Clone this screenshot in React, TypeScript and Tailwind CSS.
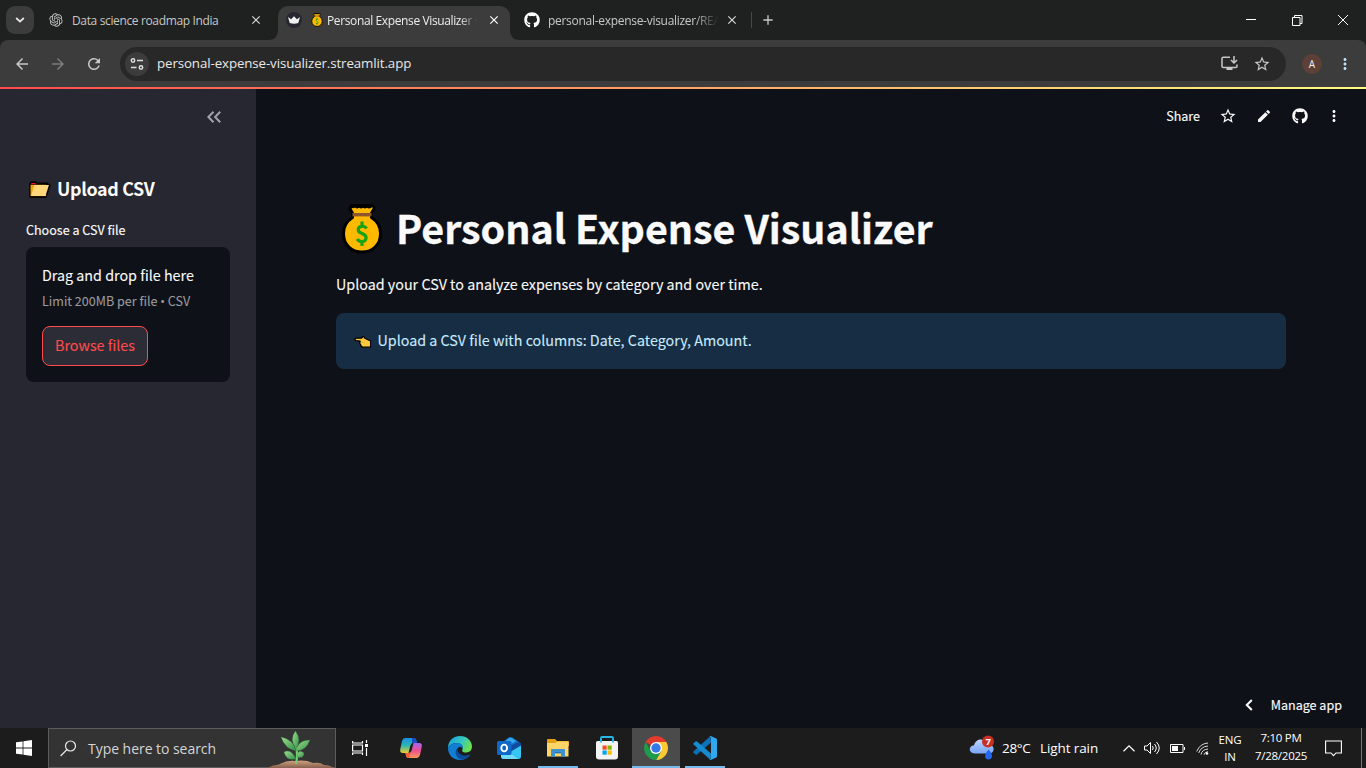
import React from "react";
import {
  MdArrowBack,
  MdArrowForward,
  MdRefresh,
  MdStarBorder,
  MdMoreVert,
  MdEdit,
  MdAdd,
  MdClose,
} from "react-icons/md";
import { RiOpenaiFill } from "react-icons/ri";
import { FaGithub } from "react-icons/fa";

const SANS = "font-['Noto_Sans_CJK_SC',sans-serif]";
const UI = "font-['Open_Sans','Noto_Sans',sans-serif]";

function MoneyBag({ className }: { className: string }) {
  return (
    <svg viewBox="0 0 40 50" className={className}>
      <path
        d="M9 2.5Q9 1.5 11 1.5H29.5Q32.500 1.500 32 5L29.500 9V13.500C35 17 38.500 22.500 38.500 29.500C38.500 41 30.500 48 20 48S1.500 41 1.500 29.500C1.500 22.500 5 17 10.500 13.500V9L8 5Z"
        fill="#ffb900"
        stroke="#000"
        strokeWidth="3"
        strokeLinejoin="round"
      />
      <path d="M9 3.200q2 1.800 4 .3q2 1.800 4 .3q2 1.600 4 0q2 1.600 4 0q2 1.600 5-.5V2H9Z" fill="#000" />
      <rect x="10.500" y="9" width="19" height="3.400" fill="#8e562e" />
      <path
        d="M24.500 24.500Q23 22 19.500 22.300C15.500 22.600 15.200 27.500 18.500 28.800L21.500 30.200C25.500 32 24.500 37.300 20.300 37.500Q16.500 37.600 15.200 35M20 17.500v5M20 37v5"
        fill="none"
        stroke="#16a316"
        strokeWidth="3.200"
      />
    </svg>
  );
}

function FolderEmoji() {
  return (
    <svg viewBox="0 0 24 18" className="ml-0.5 h-[17px] w-[23px]">
      <path d="M2 3.500Q2 1 4.500 1H8l2 1.500H20q1 0 1 1.500l2 .5-4.200 12.500H2Z" fill="#000" stroke="#000" strokeWidth="1.600" strokeLinejoin="round" />
      <path d="M2.500 4H19v12H2.500Z" fill="#f0a500" />
      <path d="M3.500 2h4l1.500 1.500h-6.500Z" fill="#e81224" />
      <path d="M6.500 4.300H22L18.300 16H3Z" fill="#ffd679" />
    </svg>
  );
}

function PointEmoji() {
  return (
    <svg viewBox="0 0 19 14" className="mt-[5px] h-[14px] w-[18px]">
      <path
        d="M1 4Q1 3 2.500 3H8L9.500 1.200Q11 1 11 2.800L17.500 6V12.500H9.500Q7 12 7.200 10L6 8.500L6.500 6L2 5.500Q1 5 1 4Z"
        fill="#ffc83d"
        stroke="#000"
        strokeWidth="1.300"
        strokeLinejoin="round"
      />
      <path d="M8 7.500h3" stroke="#e0a52a" strokeWidth=".6" />
    </svg>
  );
}

function TabStrip() {
  return (
    <div className="flex h-10 shrink-0 items-center bg-[#1f2120] text-[#c7c7c7]">
      <div className="ml-1.5 flex h-7 w-7 items-center justify-center rounded-[9px] bg-[#3c3c3c]">
        <svg viewBox="0 0 10 6" className="h-1.5 w-2.5">
          <path d="M1.200 1l3.800 3.600L8.800 1" fill="none" stroke="#e8e8e8" strokeWidth="1.800" />
        </svg>
      </div>
      <RiOpenaiFill className="ml-[14px] h-4 w-4" />
      <span className="ml-2 w-[177px] whitespace-nowrap pt-0.5 text-[12px] tracking-[-0.36px]">Data science roadmap India</span>
      <MdClose className="h-[14px] w-[14px] text-[#d8d8d8]" />
      <svg viewBox="0 0 10 10" className="ml-[5px] h-2.5 w-2.5 self-end">
        <path d="M10 0V10H0Q10 10 10 0Z" fill="#3c3c3c" />
      </svg>
      <div className="flex h-[34px] w-[232px] items-center self-end rounded-t-[10px] bg-[#3c3c3c] pb-1.5 text-[#ececec]">
        <div className="ml-2 flex h-4 w-4 items-center justify-center rounded-full bg-[#262730]">
          <svg viewBox="0 0 14 9" className="h-2 w-3">
            <path d="M0 1l3.600 2.500L7 0l3.400 3.500L14 1l-2 7Q7 9.500 2 8Z" fill="#f0f0f0" />
          </svg>
        </div>
        <MoneyBag className="ml-[9px] h-[14px] w-3" />
        <span className="ml-1 w-[151px] whitespace-nowrap pt-0.5 text-[12px] tracking-[-0.38px] [mask-image:linear-gradient(90deg,#000_88%,transparent)]">
          Personal Expense Visualizer ·
        </span>
        <MdClose className="ml-[9px] h-[14px] w-[14px] text-white" />
      </div>
      <svg viewBox="0 0 10 10" className="h-2.5 w-2.5 self-end">
        <path d="M0 0V10H10Q0 10 0 0Z" fill="#3c3c3c" />
      </svg>
      <FaGithub className="ml-1 h-4 w-4 text-white" />
      <span className="ml-2 w-[172px] whitespace-nowrap pt-0.5 text-[12px] tracking-[-0.29px] [mask-image:linear-gradient(90deg,#000_85%,transparent_99%)]">
        personal-expense-visualizer/REA
      </span>
      <MdClose className="ml-[5px] h-[14px] w-[14px] text-[#d8d8d8]" />
      <div className="ml-3 h-4 w-px bg-[#464746]" />
      <MdAdd className="ml-2 h-4 w-4" />
      <svg viewBox="0 0 104 12" className="ml-auto mr-[17px] h-3 w-[104px]" fill="none" stroke="#fff" strokeWidth="1">
        <path d="M1 5.500h10M47.500 3.500h7.500v8h-7.500zM49.500 3.500v-2h7.500v8h-2M93 1l10 10M103 1l-10 10" />
      </svg>
    </div>
  );
}

function Toolbar() {
  return (
    <div className="h-[47px] shrink-0 bg-[#1f2120]">
      <div className="flex h-full items-center rounded-t-[8px] bg-[#3c3c3c] text-[#c7c7c7]">
        <MdArrowBack className="ml-[13px] h-[18px] w-[18px]" />
        <MdArrowForward className="ml-[18px] h-[18px] w-[18px] text-[#7b7b7b]" />
        <MdRefresh className="ml-[18px] h-[18px] w-[18px]" />
        <div className="ml-[17px] flex h-[34px] w-[1166px] items-center rounded-full bg-[#282828]">
          <div className="ml-[5px] flex h-6 w-6 items-center justify-center rounded-full bg-[#3c3c3c]">
            <svg viewBox="0 0 14 12" className="h-3 w-3.5" fill="none" stroke="#dedede" strokeWidth="1.500">
              <circle cx="3" cy="2.500" r="1.700" />
              <path d="M7 2.500h6M1 9.500h5.500" />
              <circle cx="11" cy="9.500" r="1.700" />
            </svg>
          </div>
          <span className="ml-2 text-[13.300px] tracking-[-0.1px] text-[#e8e8e8]">personal-expense-visualizer.streamlit.app</span>
          <svg viewBox="0 0 17 15" className="ml-auto h-[15px] w-[17px]" fill="none" stroke="#c7c7c7" strokeWidth="1.500">
            <path d="M9 1.200H2.200Q1 1.200 1 2.400V10.300Q1 11.500 2.200 11.500H14.800Q16 11.500 16 10.300V8.500M13 0v6.500M10 4l3 3l3-3" />
            <path d="M5.500 12h6v2h-6z" fill="#c7c7c7" stroke="none" />
          </svg>
          <MdStarBorder className="ml-[15px] mr-[15px] h-[18px] w-[18px]" />
        </div>
        <div className="ml-4 flex h-5 w-5 items-center justify-center rounded-full bg-[#5d4037] text-[10px] leading-none text-[#f3efed]">A</div>
        <MdMoreVert className="ml-3.5 h-[18px] w-[18px] text-[#bfe0fb]" />
      </div>
    </div>
  );
}

function Sidebar() {
  return (
    <aside className="flex w-64 shrink-0 flex-col bg-[#262730] px-[26px] text-[#fafafa]">
      <svg viewBox="0 0 14 12" className="mr-[9px] mt-[22px] h-3 w-[14px] self-end" fill="none" stroke="#a3a4a9" strokeWidth="2">
        <path d="M6.500 .8L1.400 6L6.500 11.200M13.200 .8L8.100 6L13.200 11.200" />
      </svg>
      <div className="mt-[54px] flex h-6 items-center">
        <FolderEmoji />
        <h2 className="-mt-0.5 ml-[6px] whitespace-nowrap text-[17.900px] font-bold leading-6 tracking-[-0.35px]">Upload CSV</h2>
      </div>
      <div className="mt-[19px] h-5 text-[12.550px] leading-5 [-webkit-text-stroke:0.15px]">Choose a CSV file</div>
      <div className="mt-[7px] flex h-[135px] flex-col rounded-lg bg-[#0e1117] px-4">
        <div className="mt-4 h-6 whitespace-nowrap text-[14.300px] leading-6 [-webkit-text-stroke:0.1px]">Drag and drop file here</div>
        <div className="mt-1 h-5 whitespace-nowrap text-[12.550px] leading-5 text-[#9a9b9f] [-webkit-text-stroke:0.1px]">
          Limit 200MB per file <span className="font-['Open_Sans',sans-serif]">•</span> CSV
        </div>
        <button className="mt-[15px] flex h-10 w-[106px] justify-center rounded-lg border border-[#ff4b4b] bg-[#2b2c36] pt-1.5 text-[14.300px] leading-6 text-[#ff4b4b] [-webkit-text-stroke:0.1px]">
          Browse files
        </button>
      </div>
    </aside>
  );
}

function MainPanel() {
  return (
    <main className="flex min-w-0 flex-1 flex-col text-[#fafafa]">
      <div className="flex h-[54px] items-center justify-end pr-[23px]">
        <span className="text-[12.550px] leading-5 [-webkit-text-stroke:0.15px]">Share</span>
        <MdStarBorder className="ml-[19px] h-[18px] w-[18px]" />
        <MdEdit className="ml-[19px] h-4 w-4" />
        <FaGithub className="ml-5 h-4 w-4" />
        <MdMoreVert className="ml-[17px] h-[18px] w-[18px]" />
      </div>
      <div className="mt-[59px] flex h-[53px] items-center pl-[86px]">
        <MoneyBag className="h-[50px] w-10" />
        <h1 className="-mt-[5px] ml-[14px] whitespace-nowrap text-[39.400px] font-bold leading-[53px] [-webkit-text-stroke:0.3px]">
          Personal Expense Visualizer
        </h1>
      </div>
      <p className="ml-20 mt-[17px] h-6 text-[14.300px] leading-6 tracking-[0.01px] [-webkit-text-stroke:0.1px]">
        Upload your CSV to analyze expenses by category and over time.
      </p>
      <div className="ml-20 mr-20 mt-[17px] flex h-14 items-center rounded-lg bg-[#172d43] pb-[3px] pl-[18px] text-[14.300px] leading-6 text-[#c7ebff]">
        <PointEmoji />
        <span className="ml-[5.500px] [-webkit-text-stroke:0.1px]">Upload a CSV file with columns: Date, Category, Amount.</span>
      </div>
      <div className="mt-auto flex h-[46px] items-center justify-end pr-6">
        <svg viewBox="0 0 8 12" className="h-3 w-2" fill="none" stroke="#fff" strokeWidth="2">
          <path d="M6.800 1L1.800 6L6.800 11" />
        </svg>
        <span className="ml-[18px] text-[12.550px] leading-5 [-webkit-text-stroke:0.15px]">Manage app</span>
      </div>
    </main>
  );
}

function Plant() {
  return (
    <svg viewBox="0 0 68 39" className="mt-auto h-[39px] w-[68px]">
      <defs>
        <linearGradient id="leaf" x1="0" y1="0" x2="1" y2="1">
          <stop offset="0" stopColor="#a3dd8d" />
          <stop offset="1" stopColor="#2f8f48" />
        </linearGradient>
        <linearGradient id="soil" x1="0" y1="0" x2="0" y2="1">
          <stop offset="0" stopColor="#d09f80" />
          <stop offset="1" stopColor="#85604c" />
        </linearGradient>
      </defs>
      <path d="M0 39Q5 36 12 35.500Q20 31 28 32Q38 30.500 46 34Q53 33 57 36Q63 36 67 39Z" fill="url(#soil)" />
      <path d="M29 35Q31 26 29 16" fill="none" stroke="#74ce70" strokeWidth="2.200" />
      <g fill="url(#leaf)" stroke="#287a3c" strokeWidth=".3">
        <path d="M29 20Q22 10 28.500 2Q35 11 29 20Z" />
        <path d="M29 22Q18 20 14 8Q26 10 29 22Z" />
        <path d="M29 22Q31 11 43 11Q39 22 29 22Z" />
        <path d="M29 30Q24 19 17 23Q19 32 29 30Z" />
        <path d="M30 28Q31 19 37 24Q37 30 30 28Z" />
      </g>
    </svg>
  );
}

function CopilotIcon() {
  return (
    <svg viewBox="0 0 24 24" className="h-6 w-6">
      <defs>
        <linearGradient id="cp1" x1="0" y1="0" x2="0" y2="1">
          <stop offset="0" stopColor="#1b8ce8" />
          <stop offset=".5" stopColor="#29b8b0" />
          <stop offset="1" stopColor="#f3cc2d" />
        </linearGradient>
        <linearGradient id="cp2" x1="0" y1="0" x2="0" y2="1">
          <stop offset="0" stopColor="#a565ee" />
          <stop offset=".5" stopColor="#ee4f91" />
          <stop offset="1" stopColor="#ff9b58" />
        </linearGradient>
      </defs>
      <path d="M6 2H15Q17 2 18 7H14Q12 7 11 11L9.500 17H4Q0 17 1.500 12L3 5Q4 2 6 2Z" fill="url(#cp1)" />
      <path d="M13 2h2.500q1.500 0 2.500 5h-5Z" fill="#174fc4" />
      <path d="M18 22H9Q7 22 6.500 17H10Q12 17 13 13L14.500 7H20Q24 7 22.500 12L21 19Q20 22 18 22Z" fill="url(#cp2)" />
      <path d="M6.500 17H10L11.500 16L10 22H9Q7 22 6.500 17Z" fill="#f45b3b" />
    </svg>
  );
}

function EdgeIcon() {
  return (
    <svg viewBox="0 0 24 24" className="h-6 w-6">
      <defs>
        <linearGradient id="ed1" x1="0" y1="0" x2="1" y2=".4">
          <stop offset="0" stopColor="#159cda" />
          <stop offset=".6" stopColor="#35c6c3" />
          <stop offset="1" stopColor="#68e052" />
        </linearGradient>
      </defs>
      <path d="M0 12C0 4 6 0 12 0C19 0 24 5 24 10.500C24 15 20.500 16.500 17.500 16.500C14.500 16.500 14 15 14.300 14C16 10 13 7 9 7Q3 7 0 12Z" fill="url(#ed1)" />
      <path d="M0 12Q3 7 9 7C13 7 15.500 9.500 14.800 12.500Q12 9 9.500 12.500C7 17 11 22 18 20Q22 19 22.300 18.500C20 22 16.500 24 12 24C5 24 0 19 0 12Z" fill="#117ed3" />
      <path d="M9 12.500C5.500 17 9 23 14 23.800Q19 23 22.300 18.300Q17 21 13 18.500Q9 16 9 12.500Z" fill="#0c4c9c" />
    </svg>
  );
}

function OutlookIcon() {
  return (
    <svg viewBox="0 0 24 24" className="h-6 w-6">
      <path d="M4 7.500L11.500 1.500Q13.500.5 15.500 1.500L24 7.500V20Q24 23 21 23H6Q4 23 4 20Z" fill="#1272cc" />
      <path d="M6 7L12 2.200Q13.500 1.500 15 2.200L19 5L10 10.500Z" fill="#35a8ea" />
      <path d="M13 10L22 5.800L24 7.500V10L14 15.500Z" fill="#104a9e" />
      <path d="M24 9.500V20Q24 23 21 23H8Q5 23 4 21L14 15.500Z" fill="#36c5f1" />
      <path d="M4 18.500L13 17L21 23H7Q4 23 4 20Z" fill="#6fdcf8" />
      <rect x="0" y="5" width="14.500" height="14" rx="1.500" fill="#0d68c8" />
      <ellipse cx="7.200" cy="12" rx="2.900" ry="3.400" fill="none" stroke="#fff" strokeWidth="1.900" />
    </svg>
  );
}

function ExplorerIcon() {
  return (
    <svg viewBox="0 0 22 20" className="h-5 w-[22px]">
      <path d="M0 1.500Q0 1 1 1H8l2 2H21q1 0 1 1v4H0Z" fill="#e2a015" />
      <path d="M0 5H8.500L10 3.500H21.500V18.500H0Z" fill="#ffd567" />
      <path d="M4 18.800V11.500Q4 11 5 11H17q1 0 1 .8V18.800H14V15.500H8V18.800Z" fill="#3d91d2" />
      <path d="M8 14.500h6" stroke="#2375b5" />
    </svg>
  );
}

function StoreIcon() {
  return (
    <svg viewBox="0 0 24 24" className="h-6 w-6">
      <path d="M6 7V1.800Q6 1 7 1H17q1 0 1 .8V7" fill="none" stroke="#27b7e7" strokeWidth="1.800" />
      <path d="M1 6.500Q1 5 2.500 5H21.500Q23 5 23 6.500V20.500Q23 23.500 20 23.500H4Q1 23.500 1 20.500Z" fill="#f3f3f3" />
      <path d="M6 6.500V3M18 6.500V3" stroke="#27b7e7" strokeWidth="1.800" />
      <path d="M7.500 9.500h4.200v4.200H7.500z" fill="#f25022" />
      <path d="M12.500 9.500h4.200v4.200h-4.200z" fill="#7fba00" />
      <path d="M7.500 14.500h4.200v4.200H7.500z" fill="#00a4ef" />
      <path d="M12.500 14.500h4.200v4.200h-4.200z" fill="#ffb900" />
    </svg>
  );
}

function ChromeIcon() {
  return (
    <svg viewBox="0 0 24 24" className="h-6 w-6">
      <path d="M12 12L1.608 6A12 12 0 0 1 22.392 6Z" fill="#e33b2e" />
      <path d="M12 6H22.392A12 12 0 0 1 12 24L17.200 15Z" fill="#fcc934" />
      <path d="M1.608 6L6.800 15L12 18L17.200 15L12 24A12 12 0 0 1 1.608 6Z" fill="#1e9b4b" />
      <circle cx="12" cy="12" r="6" fill="#fff" />
      <circle cx="12" cy="12" r="4.700" fill="#3477e8" />
    </svg>
  );
}

function VsCodeIcon() {
  return (
    <svg viewBox="0 0 24 24" className="h-6 w-6">
      <path d="M17.500 0L18 6.500L4 18.500Q3.200 19 2.500 18.500L.5 16.700Q0 16 .6 15.300Z" fill="#0b72b9" />
      <path d="M.6 8.600Q0 8 .5 7.300L2.500 5.500Q3.200 5 4 5.500L18 17.500L17.500 24Z" fill="#168bd1" />
      <path d="M17.200 .1Q17.700-.1 18.300 .2L23.200 2.500Q24 3 24 3.800V20.200Q24 21 23.200 21.500L18.300 23.800Q17.500 24.200 16.700 23.500Q18 23 18 21.500V2.500Q18 1 16.700 .5Z" fill="#31a7ee" />
    </svg>
  );
}

function Tile({ children, open, active }: { children: React.ReactNode; open?: boolean; active?: boolean }) {
  const bar = active ? "h-0.5 w-full bg-[#76b9ed]" : open ? "h-0.5 w-10 bg-[#76b9ed]" : "h-0.5";
  return (
    <div className={active ? "flex h-10 w-12 flex-col items-center bg-[#4b4b4b]" : "flex h-10 w-12 flex-col items-center"}>
      <div className="flex flex-1 items-center pt-0.5">{children}</div>
      <div className={bar} />
    </div>
  );
}

function Taskbar() {
  return (
    <footer className={`flex h-10 shrink-0 items-center bg-[#1c1c1c] text-white ${UI}`}>
      <div className="flex w-12 items-center justify-center">
        <svg viewBox="0 0 16 16" className="h-4 w-4" fill="#fff">
          <path d="M0 2.300L6.600 1.400V7.600H0ZM7.400 1.200L16 0V7.600H7.400ZM0 8.400H6.600V14.600L0 13.700ZM7.400 8.400H16V16L7.400 14.800Z" />
        </svg>
      </div>
      <div className="flex h-10 w-72 items-center border border-[#5c5c5c] bg-[#333]">
        <svg viewBox="0 0 17 17" className="ml-[11px] h-[17px] w-[17px]" fill="none" stroke="#eaeaea" strokeWidth="1.200">
          <circle cx="10.500" cy="6" r="5" />
          <path d="M7 9.500L.6 16" />
        </svg>
        <span className="ml-[11px] whitespace-nowrap text-[14px] tracking-[-0.04px] text-[#d5d5d5]">Type here to search</span>
        <div className="ml-auto flex h-full">
          <Plant />
        </div>
      </div>
      <div className="flex w-12 justify-center">
        <svg viewBox="0 0 16 16" className="h-4 w-4" fill="none" stroke="#fff" strokeWidth="1.200">
          <path d="M.6 1v2H10.500V1M.6 15v-2H10.500v2M.6 5H10.500v6H.6ZM14.500 0v3M14.500 8v8" />
          <path d="M13 4h3v3h-3z" fill="#fff" stroke="none" />
        </svg>
      </div>
      <div className="ml-[3px] flex gap-px">
        <Tile><CopilotIcon /></Tile>
        <Tile><EdgeIcon /></Tile>
        <Tile><OutlookIcon /></Tile>
        <Tile open><ExplorerIcon /></Tile>
        <Tile><StoreIcon /></Tile>
        <Tile active><ChromeIcon /></Tile>
        <Tile open><VsCodeIcon /></Tile>
      </div>
      <svg viewBox="0 0 26 26" className="ml-auto h-[26px] w-[26px]">
        <defs>
          <linearGradient id="cloud" x1="0" y1="0" x2="0" y2="1">
            <stop offset="0" stopColor="#bcd6ff" />
            <stop offset="1" stopColor="#78a5f4" />
          </linearGradient>
        </defs>
        <path d="M5.500 18.500C-1.500 18 0 10 5 10.500C7 2.500 16 3 17.500 9C26 8 27 18.500 20 18.500Z" fill="url(#cloud)" />
        <path d="M19.500 14.500q4 4.500 3.500 7q-.5 3-3.500 3t-3.500-3q0-3 3.500-7Z" fill="#2468ed" />
        <circle cx="19" cy="6.500" r="6" fill="#c92f25" />
        <text x="16.500" y="10" fontSize="9.500" fontWeight="700" fill="#fff">7</text>
      </svg>
      <span className="ml-[7px] w-[38px] whitespace-nowrap text-[13.500px] tracking-[-0.3px]">28°C</span>
      <span className="w-[59px] whitespace-nowrap text-[13.500px] tracking-[-0.1px]">Light rain</span>
      <svg viewBox="0 0 12 7" className="ml-6 h-[7px] w-3" fill="none" stroke="#fff" strokeWidth="1.200">
        <path d="M.5 6.300L6 .9L11.500 6.300" />
      </svg>
      <svg viewBox="0 0 17 14" className="ml-[9px] h-3.5 w-[17px]" fill="none" stroke="#fff" strokeWidth="1">
        <path d="M.5 5h2.500l3.500-3.500v11L3 9H.5ZM8.500 5q1.500 2 0 4M10.500 3q3.500 4 0 8M12.500 1q5.500 6 0 12" />
      </svg>
      <svg viewBox="0 0 15 9" className="ml-[9px] h-[9px] w-[15px]">
        <path d="M.5.5h12.500v8H.5ZM14.500 3v3" fill="none" stroke="#fff" />
        <path d="M2 2h6v5H2z" fill="#fff" />
      </svg>
      <svg viewBox="0 0 13 13" className="ml-[11px] h-[13px] w-[13px]" fill="none" stroke="#d8d8d8" strokeWidth="1">
        <path d="M.7 9.500Q4 1.500 12 1M2.700 11Q5 4.500 12 4M5 12.500Q6 7.500 12 7M8 12.800Q8.500 10 12 9.700" />
        <circle cx="11" cy="11.500" r="1.300" fill="#fff" stroke="none" />
      </svg>
      <div className="ml-[9px] flex w-6 flex-col whitespace-nowrap pb-px text-center text-[11.500px] leading-[17px] tracking-[-0.2px]">
        <span>ENG</span>
        <span>IN</span>
      </div>
      <div className="ml-[11px] flex w-[56px] flex-col items-center whitespace-nowrap pb-0.5 text-[11.500px] leading-[18px] tracking-[-0.25px]">
        <span>7:10 PM</span>
        <span>7/28/2025</span>
      </div>
      <svg viewBox="0 0 17 17" className="ml-4 h-[17px] w-[17px]" fill="none" stroke="#fff" strokeWidth="1.100">
        <path d="M.6 1h15.800v12H11L8.500 15.700L6 13H.6Z" />
      </svg>
      <div className="ml-[19px] mr-1 h-full w-px bg-[#777]" />
    </footer>
  );
}

export default function App() {
  return (
    <div className={`flex h-[768px] w-[1366px] flex-col overflow-hidden bg-[#0e1117] ${UI}`}>
      <TabStrip />
      <Toolbar />
      <div className="h-0.5 shrink-0 bg-[linear-gradient(90deg,#ff4b4b,#fffd80)]" />
      <div className={`flex min-h-0 flex-1 ${SANS}`}>
        <Sidebar />
        <MainPanel />
      </div>
      <Taskbar />
    </div>
  );
}
